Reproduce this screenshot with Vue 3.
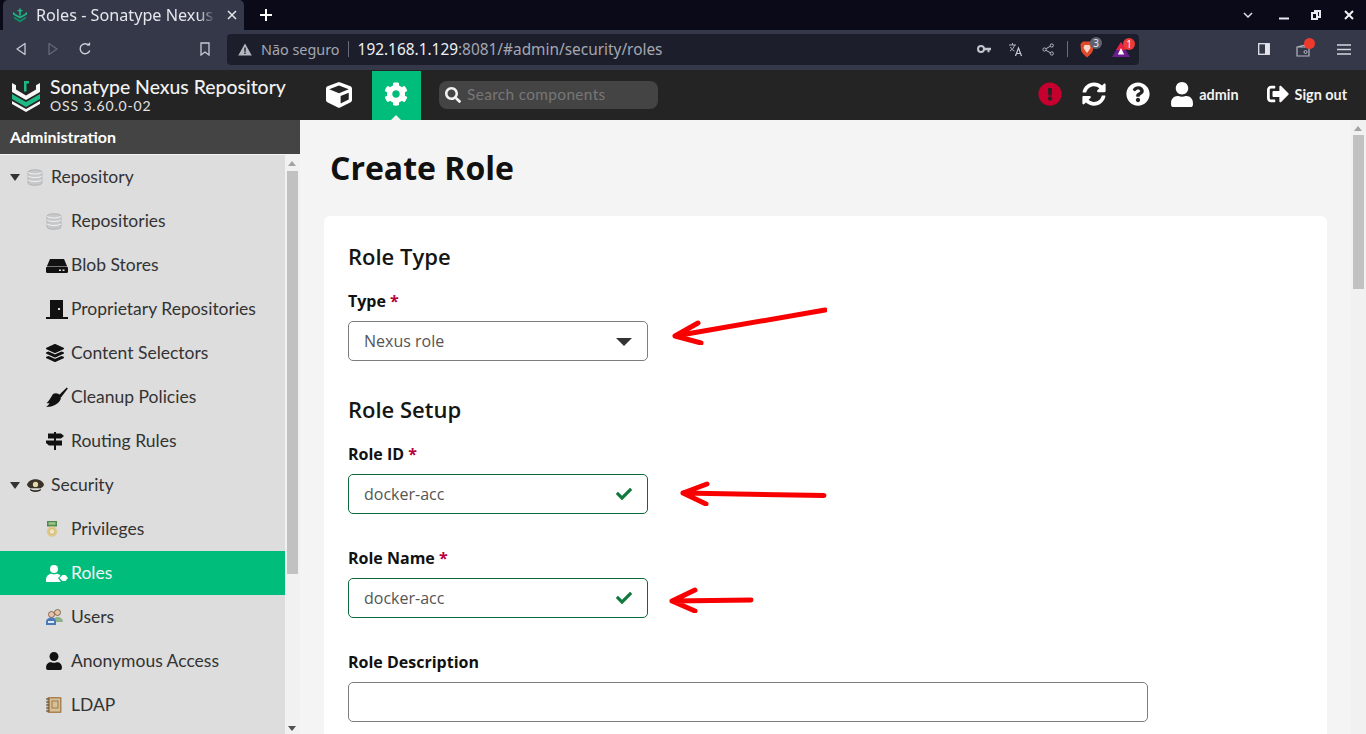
<script setup>
const cog = "M487.4 315.7l-42.6-24.6c4.3-23.2 4.3-47 0-70.2l42.6-24.6c4.9-2.8 7.1-8.6 5.5-14-11.1-35.6-30-67.8-54.7-94.6-3.8-4.1-10-5.1-14.8-2.3L380.8 110c-17.9-15.4-38.5-27.3-60.8-35.1V25.8c0-5.6-3.9-10.5-9.4-11.7-36.7-8.2-74.3-7.8-109.2 0-5.5 1.2-9.4 6.1-9.4 11.7V75c-22.2 7.9-42.8 19.8-60.8 35.1L88.7 85.5c-4.9-2.8-11-1.9-14.8 2.3-24.7 26.7-43.6 58.9-54.7 94.6-1.7 5.4.6 11.2 5.5 14L67.3 221c-4.3 23.2-4.3 47 0 70.2l-42.6 24.6c-4.9 2.8-7.1 8.6-5.5 14 11.1 35.6 30 67.8 54.7 94.6 3.8 4.1 10 5.1 14.8 2.3l42.6-24.6c17.9 15.4 38.5 27.3 60.8 35.1v49.2c0 5.6 3.9 10.5 9.4 11.7 36.7 8.2 74.3 7.8 109.2 0 5.5-1.2 9.4-6.1 9.4-11.7v-49.2c22.2-7.9 42.8-19.8 60.8-35.1l42.6 24.6c4.9 2.8 11 1.9 14.8-2.3 24.7-26.7 43.6-58.9 54.7-94.6 1.5-5.5-.7-11.3-5.6-14.1zM256 336c-44.1 0-80-35.9-80-80s35.9-80 80-80 80 35.9 80 80-35.9 80-80 80z"
const sync = "M370.72 133.28C339.458 104.008 298.888 87.962 255.848 88c-77.458.068-144.328 53.178-162.791 126.85-1.344 5.363-6.122 9.15-11.651 9.15H24.103c-7.498 0-13.194-6.807-11.807-14.176C33.933 94.924 134.813 8 256 8c66.448 0 126.791 26.136 171.315 68.685L463.03 40.97C478.149 25.851 504 36.559 504 57.941V192c0 13.255-10.745 24-24 24H345.941c-21.382 0-32.09-25.851-16.971-40.971l41.75-41.749zM32 296h134.059c21.382 0 32.09 25.851 16.971 40.971l-41.75 41.75c31.262 29.273 71.835 45.319 114.876 45.28 77.418-.07 144.315-53.144 162.787-126.849 1.344-5.363 6.122-9.15 11.651-9.15h57.304c7.498 0 13.194 6.807 11.807 14.176C478.067 417.076 377.187 504 256 504c-66.448 0-126.791-26.136-171.315-68.685L48.97 471.03C33.851 486.149 8 475.441 8 454.059V320c0-13.255 10.745-24 24-24z"
const question = "M504 256c0 136.997-111.043 248-248 248S8 392.997 8 256C8 119.083 119.043 8 256 8s248 111.083 248 248zM262.655 90c-54.497 0-89.255 22.957-116.549 63.758-3.536 5.286-2.353 12.415 2.715 16.258l34.699 26.31c5.205 3.947 12.621 3.008 16.665-2.122 17.864-22.658 30.113-35.797 57.303-35.797 20.429 0 45.698 13.148 45.698 32.958 0 14.976-12.363 22.667-32.534 33.976C247.128 238.528 216 254.941 216 296v4c0 6.627 5.373 12 12 12h56c6.627 0 12-5.373 12-12v-1.333c0-28.462 83.186-29.647 83.186-106.667 0-58.002-60.165-102-116.531-102zM256 338c-25.365 0-46 20.635-46 46 0 25.364 20.635 46 46 46s46-20.636 46-46c0-25.365-20.635-46-46-46z"
const alert = "M504 256c0 136.997-111.043 248-248 248S8 392.997 8 256C8 119.083 119.043 8 256 8s248 111.083 248 248zm-248 50c-25.405 0-46 20.595-46 46s20.595 46 46 46 46-20.595 46-46-20.595-46-46-46zm-43.673-165.346l7.418 136c.347 6.364 5.609 11.346 11.982 11.346h48.546c6.373 0 11.635-4.982 11.982-11.346l7.418-136c.375-6.874-5.098-12.654-11.982-12.654h-63.383c-6.884 0-12.356 5.78-11.981 12.654z"
const search = "M505 442.7L405.3 343c-4.5-4.5-10.6-7-17-7H372c27.6-35.3 44-79.7 44-128C416 93.1 322.9 0 208 0S0 93.1 0 208s93.1 208 208 208c48.3 0 92.7-16.4 128-44v16.3c0 6.4 2.5 12.5 7 17l99.7 99.7c9.4 9.4 24.6 9.4 33.9 0l28.3-28.3c9.4-9.4 9.4-24.6.1-34zM208 336c-70.7 0-128-57.2-128-128 0-70.7 57.2-128 128-128 70.7 0 128 57.2 128 128 0 70.7-57.2 128-128 128z"
const cube = "M239.1 6.3l-208 78c-18.7 7-31.1 25-31.1 45v225.1c0 18.2 10.3 34.8 26.5 42.9l208 104c13.5 6.8 29.4 6.8 42.9 0l208-104c16.3-8.1 26.5-24.8 26.5-42.9V129.3c0-20-12.4-37.9-31.1-44.9l-208-78C262 2.2 250 2.2 239.1 6.3zM256 68.4l192 72v1.1l-192 78-192-78v-1.1l192-72zm32 356V275.5l160-65v133.9l-160 80z"
const user = "M224 256c70.7 0 128-57.3 128-128S294.7 0 224 0 96 57.3 96 128s57.3 128 128 128zm89.6 32h-16.7c-22.2 10.2-46.9 16-72.9 16s-50.6-5.8-72.9-16h-16.7C60.2 288 0 348.2 0 422.4V464c0 26.5 21.5 48 48 48h352c26.5 0 48-21.5 48-48v-41.6c0-74.2-60.2-134.4-134.4-134.4z"
const signout = "M497 273L329 441c-15 15-41 4.5-41-17v-96H152c-13.3 0-24-10.7-24-24v-96c0-13.3 10.7-24 24-24h136V88c0-21.4 25.9-32 41-17l168 168c9.3 9.4 9.3 24.6 0 34zM192 436v-40c0-6.6-5.4-12-12-12H96c-17.7 0-32-14.3-32-32V160c0-17.7 14.3-32 32-32h84c6.6 0 12-5.4 12-12V76c0-6.6-5.4-12-12-12H96c-53 0-96 43-96 96v192c0 53 43 96 96 96h84c6.6 0 12-5.4 12-12z"
const check = "M173.898 439.404l-166.4-166.4c-9.997-9.997-9.997-26.206 0-36.204l36.203-36.204c9.997-10.007 26.207-10.007 36.204 0L192 312.69 432.095 72.596c9.997-9.997 26.207-9.997 36.204 0l36.203 36.204c9.997 9.997 9.997 26.206 0 36.204l-294.4 294.401c-9.998 9.997-26.207 9.997-36.204-.001z"

const navItems = [
  { label: 'Repository', icon: 'db', top: true },
  { label: 'Repositories', icon: 'db' },
  { label: 'Blob Stores', icon: 'blob' },
  { label: 'Proprietary Repositories', icon: 'door' },
  { label: 'Content Selectors', icon: 'layers' },
  { label: 'Cleanup Policies', icon: 'broom' },
  { label: 'Routing Rules', icon: 'sign' },
  { label: 'Security', icon: 'cap', top: true },
  { label: 'Privileges', icon: 'medal' },
  { label: 'Roles', icon: 'roles', active: true },
  { label: 'Users', icon: 'users' },
  { label: 'Anonymous Access', icon: 'anon' },
  { label: 'LDAP', icon: 'book' }
]
</script>

<template>
  <div class="page">
    <div class="tabstrip">
      <div class="tab">
        <svg class="tab-logo" viewBox="0 0 16 16" width="16" height="16">
          <path d="M1 5v2.500L8 11.500l7-4V5l-1.800 1v.8L8 9.500 2.800 6.800V6z" fill="#1fb985" />
          <path d="M2 9.500L8 13l6-3.500v2L8 15.500l-6-4z" fill="#0f8a63" />
          <path d="M7.200 1.500h1.600v7H7.200zM5.500 3h5v1.300h-5z" fill="#1fb985" />
        </svg>
        <span class="tab-title">Roles - Sonatype Nexus</span>
        <svg class="tab-close" viewBox="0 0 10 10" width="10" height="10"><path d="M1 1l8 8M9 1l-8 8" stroke="#e6e7ec" stroke-width="1.500" /></svg>
      </div>
      <svg class="newtab" viewBox="0 0 12 12" width="12" height="12"><path d="M6 0v12M0 6h12" stroke="#fff" stroke-width="2" /></svg>
      <div class="winctl">
        <svg viewBox="0 0 10 6" width="10" height="6"><path d="M1 1l4 4 4-4" fill="none" stroke="#dfe0e6" stroke-width="1.500" /></svg>
        <svg class="w-min" viewBox="0 0 10 10" width="10" height="10"><path d="M0 8.500h10" stroke="#e8e8ee" stroke-width="2" /></svg>
        <svg class="w-max" viewBox="0 0 10 10" width="10" height="10"><path d="M3 1h6v6H7M1 3h5v6H1z" fill="none" stroke="#e8e8ee" stroke-width="2" /></svg>
        <svg class="w-close" viewBox="0 0 10 10" width="10" height="10"><path d="M1 1l8 8M9 1l-8 8" stroke="#f0f0f4" stroke-width="2" /></svg>
      </div>
    </div>

    <div class="toolbar">
      <svg class="tb-back" viewBox="0 0 12 14" width="12" height="14"><path d="M10 1.500L2 7l8 5.500z" fill="none" stroke="#c8cad4" stroke-width="1.300" stroke-linejoin="round" /></svg>
      <svg class="tb-fwd" viewBox="0 0 12 14" width="12" height="14"><path d="M2 1.500L10 7l-8 5.500z" fill="none" stroke="#656979" stroke-width="1.300" stroke-linejoin="round" /></svg>
      <svg class="tb-reload" viewBox="0 0 14 14" width="14" height="14"><path d="M11.800 8.500A5 5 0 1 1 10.700 3.200" fill="none" stroke="#d0d2db" stroke-width="1.400" /><path d="M8.500 3.600h3.600V0z" fill="#d0d2db" /></svg>
      <svg class="tb-bm" viewBox="0 0 10 14" width="10" height="14"><path d="M1 1h8v12L5 10l-4 3z" fill="none" stroke="#c8cad4" stroke-width="1.300" /></svg>
      <div class="urlbar">
        <svg class="warn" viewBox="0 0 14 13" width="14" height="13"><path d="M7 .500L13.800 12.500H.2z" fill="#b4b6c0" /><path d="M6.300 4.500h1.400v4.200H6.300zM6.300 9.600h1.400v1.400H6.300z" fill="#1c1f2b" /></svg>
        <span class="insecure">Não seguro</span>
        <span class="url-sep"></span>
        <span class="url"><b>192.168.1.129</b>:8081/#admin/security/roles</span>
        <span class="url-space"></span>
        <svg class="u-key" viewBox="0 0 14 10" width="14" height="10"><circle cx="4" cy="5" r="3" fill="none" stroke="#c2c4ce" stroke-width="2" /><path d="M7 3.700h7v2.500h-1.500v2h-2v-2H7z" fill="#c2c4ce" /></svg>
        <svg class="u-tr" viewBox="0 0 15 15" width="15" height="15"><path d="M1 3h7M4.500 1v2M2 9c2.500-1.500 4-3.500 4.500-6M2.500 5c1 2 2 3 4 4" fill="none" stroke="#b4b6c0" stroke-width="1" /><path d="M7.500 14l3-8 3 8M8.500 11.500h4" fill="none" stroke="#c8cad4" stroke-width="1.200" /></svg>
        <svg class="u-share" viewBox="0 0 12 13" width="12" height="13"><circle cx="2.500" cy="6.500" r="1.600" fill="none" stroke="#b4b6c0" /><circle cx="9.800" cy="2.500" r="1.600" fill="none" stroke="#b4b6c0" /><circle cx="9.800" cy="10.500" r="1.600" fill="none" stroke="#b4b6c0" /><path d="M4 5.700l4.400-2.500M4 7.300l4.400 2.500" stroke="#b4b6c0" /></svg>
        <span class="u-sep"></span>
        <span class="brave">
          <svg viewBox="0 0 14 17" width="14" height="17"><path d="M3 .500h8L13.500 3 13 9c-.5 2.500-3.500 5.500-6 7.500C4.500 14.500 1.500 11.500 1 9L.5 3z" fill="#e2492a" /><path d="M4.500 4h5l1 3-2 3-1.500 2-1.500-2-2-3z" fill="#f5d9c8" /></svg>
          <span class="b-badge">3</span>
        </span>
        <span class="bat">
          <svg viewBox="0 0 18 15" width="18" height="15"><path d="M9 0l9 15H0z" fill="#6b1d8f" /><path d="M9 0l5 8H4z" fill="#e8213f" /><path d="M9 6l3.200 6.500H5.800z" fill="#fff" /></svg>
          <span class="r-badge">1</span>
        </span>
      </div>
      <svg class="tb-side" viewBox="0 0 12 12" width="12" height="12"><rect x=".7" y=".7" width="10.600" height="10.600" fill="none" stroke="#e4e5ea" stroke-width="1.300" /><rect x="7" y="1" width="4" height="10" fill="#e4e5ea" /></svg>
      <span class="wallet">
        <svg viewBox="0 0 14 13" width="14" height="13"><path d="M1 3h12v9H1zM1 3l8-2v2" fill="none" stroke="#b4b6c0" stroke-width="1.200" /><circle cx="9.500" cy="8" r="1.500" fill="none" stroke="#b4b6c0" /></svg>
        <span class="w-dot"></span>
      </span>
      <svg class="tb-menu" viewBox="0 0 14 11" width="14" height="11"><path d="M0 1h14M0 5.500h14M0 10h14" stroke="#d4d5dd" stroke-width="1.300" /></svg>
    </div>

    <header class="nxbar">
      <svg class="nx-logo" viewBox="0 0 28 31" width="28" height="31">
        <path d="M0 2l4 2.200v4.300l10 6 10-6V4.200L28 2v9l-14 8L0 11z" fill="#f6f6f6" />
        <path d="M0 13l14 8 14-8v5l-14 8-14-8z" fill="#1fb985" />
        <path d="M0 20l14 8 14-8v3l-14 8-14-8z" fill="#f6f6f6" />
        <path d="M12 0h5v2.500h-2.500v8H12z" fill="#1fb985" />
      </svg>
      <div class="nx-brand">
        <div class="nx-name">Sonatype Nexus Repository</div>
        <div class="nx-ver">OSS 3.60.0-02</div>
      </div>
      <button class="nx-btn nx-cube"><svg viewBox="0 0 512 512" width="26" height="26"><path :d="cube" fill="#fff" /></svg></button>
      <button class="nx-btn nx-gear"><svg viewBox="0 0 512 512" width="24" height="24"><path :d="cog" fill="#fff" /></svg><span class="nx-caret"></span></button>
      <div class="nx-search">
        <svg viewBox="0 0 512 512" width="16" height="16"><path :d="search" fill="#f2f2f2" /></svg>
        <span>Search components</span>
      </div>
      <div class="nx-right">
        <svg class="r-alert" viewBox="0 0 512 512" width="24" height="24"><path :d="alert" fill="#c5002f" /></svg>
        <svg class="r-sync" viewBox="0 0 512 512" width="24" height="24"><path :d="sync" fill="#fff" /></svg>
        <svg class="r-help" viewBox="0 0 512 512" width="24" height="24"><path :d="question" fill="#fff" /></svg>
        <svg class="r-user" viewBox="0 0 448 512" width="22" height="25"><path :d="user" fill="#fff" /></svg>
        <span class="r-text r-admin">admin</span>
        <svg class="r-out" viewBox="0 0 512 512" width="22" height="22"><path :d="signout" fill="#fff" /></svg>
        <span class="r-text">Sign out</span>
      </div>
    </header>

    <div class="body">
      <aside class="sidebar">
        <div class="side-head">Administration</div>
        <div class="side-body">
          <nav class="nav">
            <div v-for="item in navItems" :key="item.label" class="nav-row" :class="{ top: item.top, active: item.active }">
              <span v-if="item.top" class="twist"></span>
              <span class="nav-icon">
                <svg v-if="item.icon === 'db'" viewBox="0 0 16 17" width="16" height="17">
                  <path d="M1 3c0-3 14-3 14 0v11c0 3-14 3-14 0z" fill="#c6c8ca" stroke="#a8aaac" stroke-width=".7" />
                  <path d="M1 7c3 2 11 2 14 0M1 11c3 2 11 2 14 0M1 3.500c3 2 11 2 14 0" fill="none" stroke="#f2f2f2" stroke-width="1" />
                </svg>
                <svg v-else-if="item.icon === 'blob'" viewBox="0 0 22 15" width="22" height="15">
                  <path d="M4 1h14l3 7H1z" fill="#111" />
                  <rect x="0" y="8.500" width="22" height="6.500" rx="1.500" fill="#111" />
                  <path d="M13 11.500h2v1.500h-2zM16.500 11.500h2v1.500h-2z" fill="#ddd" />
                </svg>
                <svg v-else-if="item.icon === 'door'" viewBox="0 0 22 19" width="22" height="19">
                  <path d="M4 0h13v17H4z" fill="#111" /><path d="M0 17h22v2H0z" fill="#111" /><rect x="12" y="8" width="2" height="2" fill="#ddd" />
                </svg>
                <svg v-else-if="item.icon === 'layers'" viewBox="0 0 512 512" width="18" height="18"><path d="M12.410 148.020l232.940 105.670c6.800 3.090 14.490 3.090 21.290 0l232.940-105.670c16.550-7.510 16.550-32.520 0-40.030L266.650 2.310a25.607 25.607 0 0 0-21.290 0L12.410 107.980c-16.550 7.510-16.550 32.530 0 40.040zm487.180 88.280l-58.090-26.330-161.640 73.270c-7.560 3.430-15.590 5.170-23.860 5.170s-16.290-1.740-23.860-5.170L70.510 209.970l-58.100 26.330c-16.550 7.500-16.550 32.500 0 40l232.940 105.590c6.800 3.080 14.490 3.080 21.290 0L499.590 276.300c16.550-7.500 16.550-32.500 0-40zm0 127.800l-57.870-26.230-161.860 73.370c-7.560 3.430-15.590 5.170-23.860 5.170s-16.290-1.740-23.860-5.170L70.290 337.870 12.410 364.100c-16.550 7.500-16.550 32.500 0 40l232.940 105.590c6.800 3.080 14.490 3.080 21.290 0L499.590 404.100c16.550-7.500 16.550-32.500 0-40z" fill="#111" /></svg>
                <svg v-else-if="item.icon === 'broom'" viewBox="0 0 22 20" width="22" height="20">
                  <path d="M12.500 8.500L20.800 0.500l1 1L15 10.500z" fill="#111" />
                  <path d="M7 7c2.500-1.500 5.500-.8 7 1.200 1.200 1.600 1 3.300.3 4.800-1.800 3.500-6.500 6-11 6.800L0 20c2-1 3-2.800 3.500-4-1 .3-2 .3-2.800 0C3 14 5 10 7 7z" fill="#111" />
                </svg>
                <svg v-else-if="item.icon === 'sign'" viewBox="0 0 18 18" width="18" height="18">
                  <path d="M2 1.500h13l3 2.500-3 2.500H2zM0 8.500h16v5H3l-3-2.500z" fill="#111" /><path d="M8 0h2v18H8z" fill="#111" />
                </svg>
                <svg v-else-if="item.icon === 'cap'" viewBox="0 0 16 12" width="17" height="13">
                  <path d="M0 5C1 1.500 5 0 8 0s7 1.500 8 5c0 1.500-2 3-3.500 3.500h-9C2 8 0 6.500 0 5z" fill="#3a3328" />
                  <path d="M3 9c2.500 2 7.500 2 10 0v1.500c-2.500 2-7.500 2-10 0z" fill="#2a251c" /><circle cx="8" cy="5" r="2.500" fill="#e5d7a8" />
                </svg>
                <svg v-else-if="item.icon === 'medal'" viewBox="0 0 12 16" width="12" height="16">
                  <rect x="1" y="0" width="10" height="5.500" fill="#4f8b48" /><rect x="2.500" y="1.200" width="7" height="2.600" fill="#9dc08f" />
                  <circle cx="6" cy="10.500" r="5.200" fill="#e0c98a" /><circle cx="6" cy="10.500" r="2.800" fill="#f2e6bf" stroke="#c0a868" stroke-width=".6" />
                </svg>
                <svg v-else-if="item.icon === 'roles'" viewBox="0 0 22 17" width="22" height="17">
                  <circle cx="8" cy="4" r="4" fill="#fff" /><path d="M0 17v-2.500C0 11 3 8.700 5.500 8.700c1.500.8 3.500.8 5 0 1.700 0 3.200.8 4 2L12 13l3 4z" fill="#fff" />
                  <path d="M13.500 13l3-3h3l2.500 3-2.500 3h-3z" fill="#fff" />
                </svg>
                <svg v-else-if="item.icon === 'users'" viewBox="0 0 17 16" width="17" height="16">
                  <circle cx="11.500" cy="3.500" r="3" fill="#e6c6a6" stroke="#6a4f3a" stroke-width=".8" /><path d="M7 13c0-3.500 2-5 4.500-5S17 9.500 17 13z" fill="#8fb08b" />
                  <circle cx="5.500" cy="5.500" r="3" fill="#e6c6a6" stroke="#7a4a3a" stroke-width=".8" /><path d="M0 16v-3c0-3 2.500-4.500 5.500-4.500S10 10 10 13v3z" fill="#4a79b8" /><path d="M2 12h6v2H2z" fill="#dfe8f4" />
                </svg>
                <svg v-else-if="item.icon === 'anon'" viewBox="0 0 448 512" width="16" height="18"><path :d="user" fill="#111" /></svg>
                <svg v-else-if="item.icon === 'book'" viewBox="0 0 16 16" width="16" height="16">
                  <rect x="1.500" y="0" width="14" height="16" rx="1" fill="#a98355" /><rect x="4" y="1.500" width="10" height="13" fill="#d9bf94" />
                  <rect x="6" y="4" width="6" height="7" fill="none" stroke="#8c6a40" stroke-width=".8" />
                  <path d="M0 2h3M0 5h3M0 8h3M0 11h3M0 14h3" stroke="#55422b" stroke-width="1" />
                </svg>
              </span>
              <span class="nav-label">{{ item.label }}</span>
            </div>
          </nav>
          <div class="vscroll side-scroll">
            <span class="arrow up"></span>
            <span class="thumb"></span>
            <span class="arrow down"></span>
          </div>
        </div>
      </aside>

      <main class="main">
        <div class="content">
          <h1>Create Role</h1>
          <section class="card">
            <h2>Role Type</h2>
            <label class="lbl">Type <em>*</em></label>
            <div class="field">
              <span>Nexus role</span>
              <span class="caret"></span>
            </div>
            <div class="arrow-note note-1">
              <svg viewBox="0 0 156 38" width="156" height="38"><path d="M154 3L4 29M27 16L4 29M30 36L4 29" fill="none" stroke="#f80000" stroke-width="5" stroke-linecap="round" /></svg>
            </div>

            <h2 class="h-setup">Role Setup</h2>
            <label class="lbl">Role ID <em>*</em></label>
            <div class="field ok">
              <span>docker-acc</span>
              <svg viewBox="0 0 512 512" width="16" height="16"><path :d="check" fill="#0f7a3c" /></svg>
            </div>
            <div class="arrow-note note-2">
              <svg viewBox="0 0 148 26" width="148" height="26"><path d="M145 15.500L4 13M28 4L4 13M27 24L4 13" fill="none" stroke="#f80000" stroke-width="5" stroke-linecap="round" /></svg>
            </div>

            <label class="lbl lbl-next">Role Name <em>*</em></label>
            <div class="field ok">
              <span>docker-acc</span>
              <svg viewBox="0 0 512 512" width="16" height="16"><path :d="check" fill="#0f7a3c" /></svg>
            </div>
            <div class="arrow-note note-3">
              <svg viewBox="0 0 86 26" width="86" height="26"><path d="M83 13L4 14M27 3L4 14M27 24L4 14" fill="none" stroke="#f80000" stroke-width="5" stroke-linecap="round" /></svg>
            </div>

            <label class="lbl lbl-next">Role Description</label>
            <div class="field wide"></div>
          </section>
        </div>
        <div class="vscroll main-scroll">
          <span class="arrow up"></span>
          <span class="thumb"></span>
        </div>
      </main>
    </div>
  </div>
</template>

<style scoped>
.page { width: 1366px; height: 734px; overflow: hidden; display: flex; flex-direction: column; background: #f4f4f4; }

/* browser chrome */
.tabstrip { height: 30px; background: #0a0a19; display: flex; align-items: center; position: relative; flex: none; }
.tab { margin-left: 3px; width: 241px; height: 30px; background: #343849; border-radius: 5px 5px 0 0; display: flex; align-items: center; padding-left: 9px; box-sizing: border-box; position: relative; }
.tab-title { margin-left: 8px; width: 180px; overflow: hidden; white-space: nowrap; font: 16.2px "Noto Sans", sans-serif; color: #e6e7ec; -webkit-mask-image: linear-gradient(90deg, #000 90%, transparent); mask-image: linear-gradient(90deg, #000 90%, transparent); }
.tab-close { margin-left: 11px; }
.newtab { margin-left: 16px; }
.winctl { margin-left: auto; display: flex; align-items: center; margin-right: 12px; }
.winctl .w-min { margin-left: 26px; }
.winctl .w-max { margin-left: 22px; }
.winctl .w-close { margin-left: 23px; }

.toolbar { height: 40px; background: #343849; display: flex; align-items: center; flex: none; box-sizing: border-box; padding-bottom: 2px; border-top: 0; }
.tb-back { margin-left: 15px; }
.tb-fwd { margin-left: 20px; }
.tb-reload { margin-left: 19px; }
.tb-bm { margin-left: 108px; }
.urlbar { margin-left: 17px; width: 912px; height: 31px; background: #1c1f2b; border-radius: 4px; display: flex; align-items: center; padding-left: 11px; box-sizing: border-box; }
.insecure { margin-left: 9px; font: 14.4px "Noto Sans", sans-serif; color: #a5a7b2; white-space: nowrap; }
.url-sep { width: 1px; height: 16px; background: #686b79; margin-left: 8px; margin-right: 9px; }
.url { font: 15.4px "Noto Sans", sans-serif; color: #a5a7b2; white-space: nowrap; }
.url b { font-weight: 400; color: #eef0f4; }
.url-space { flex: 1; }
.u-tr { margin-left: 17px; }
.u-share { margin-left: 19px; }
.u-sep { width: 1px; height: 16px; background: #6a6d7a; margin-left: 13px; }
.brave { position: relative; margin-left: 12px; width: 14px; height: 17px; display: block; }
.b-badge { position: absolute; left: 10px; top: -4px; width: 12px; height: 12px; border-radius: 50%; background: #5f6270; color: #e8e8ee; font: 10px/12px "Noto Sans", sans-serif; text-align: center; }
.bat { position: relative; margin-left: 18px; margin-right: 9px; width: 18px; height: 15px; display: block; }
.r-badge { position: absolute; left: 11px; top: -4px; width: 12px; height: 12px; border-radius: 50%; background: #ee3a3a; color: #f7f7f7; font: 10px/12px "Noto Sans", sans-serif; text-align: center; }
.tb-side { margin-left: 119px; }
.wallet { position: relative; margin-left: 26px; width: 14px; height: 13px; display: block; }
.w-dot { position: absolute; left: 8px; top: -5px; width: 11px; height: 11px; border-radius: 50%; background: #ee3a2d; }
.tb-menu { margin-left: 27px; }

/* nexus header */
.nxbar { height: 50px; background: #242424; display: flex; align-items: center; flex: none; position: relative; }
.nx-logo { margin-left: 12px; flex: none; margin-top: 2px; }
.nx-brand { margin-left: 10px; width: 277px; height: 50px; box-sizing: border-box; padding-top: 4px; flex: none; }
.nx-name { font: 500 19.4px/25px Lato, "Open Sans", sans-serif; color: #f2f2f2; white-space: nowrap; }
.nx-ver { font: 14px/14px Lato, sans-serif; color: #e2e2e2; letter-spacing: .85px; white-space: nowrap; }
.nx-btn { border: 0; padding: 0; background: transparent; display: flex; align-items: center; justify-content: center; }
.nx-cube { width: 49px; height: 49px; margin-left: -13px; }
.nx-gear { width: 49px; height: 49px; margin-left: 9px; align-self: flex-end; background: #00bd7b; position: relative; }
.nx-gear svg { margin-top: -3px; margin-left: -1px; }
.nx-caret { position: absolute; left: 19px; bottom: 0; border-left: 5px solid transparent; border-right: 5px solid transparent; border-bottom: 5px solid #f4f4f4; }
.nx-search { margin-left: 18px; width: 219px; height: 28px; background: #444; border-radius: 8px; display: flex; align-items: center; padding-left: 6px; box-sizing: border-box; }
.nx-search span { margin-left: 6px; margin-bottom: 2px; font: 15.4px Lato, sans-serif; color: #777; letter-spacing: .35px; white-space: nowrap; }
.nx-right { margin-left: auto; display: flex; align-items: center; padding-right: 19px; padding-bottom: 2px; }
.r-sync { margin-left: 20px; }
.r-help { margin-left: 20px; }
.r-user { margin-left: 21px; margin-right: 1px; }
.r-text { font: 700 14.4px Lato, sans-serif; color: #f2f2f2; white-space: nowrap; }
.r-admin { margin-left: 5px; }
.r-out { margin-left: 28px; margin-right: 6px; }

/* sidebar */
.body { flex: 1; display: flex; min-height: 0; }
.sidebar { width: 300px; flex: none; display: flex; flex-direction: column; background: #f1f1f1; }
.side-head { height: 34px; flex: none; background: #444; color: #fff; font: 700 16px/34px Lato, "Open Sans", sans-serif; padding-left: 10px; border-bottom: 1px solid #f4f4f4; box-sizing: content-box; }
.side-body { flex: 1; min-height: 0; display: flex; }
.nav { width: 285px; background: #ddd; flex: none; }
.nav-row { height: 44px; display: flex; align-items: center; padding-left: 46px; color: #333; font: 17.5px Lato, sans-serif; white-space: nowrap; }
.nav-row.top { padding-left: 10px; }
.nav-label { padding-bottom: 1px; }
.twist { width: 0; height: 0; border-left: 5px solid transparent; border-right: 5px solid transparent; border-top: 7px solid #333; margin-right: 7px; }
.nav-icon { width: 25px; height: 20px; display: flex; align-items: center; flex: none; }
.nav-icon svg { flex: none; }
.nav-row.top .nav-icon { width: 24px; }
.nav-row.active { background: #00bd7b; color: #f4f4f4; }

.vscroll { width: 15px; flex: none; background: #f1f1f1; position: relative; }
.thumb { position: absolute; left: 2px; width: 11px; background: #c1c1c1; }
.arrow { position: absolute; left: 3px; width: 0; height: 0; border-left: 4px solid transparent; border-right: 4px solid transparent; }
.arrow.up { top: 6px; border-bottom: 5px solid #a3a3a3; }
.arrow.down { bottom: 3px; border-top: 5px solid #505050; }
.side-scroll .thumb { top: 16px; height: 403px; }
.main-scroll .thumb { top: 15px; height: 154px; }

/* content */
.main { flex: 1; display: flex; min-width: 0; overflow: hidden; background: #f4f4f4; }
.content { flex: 1; min-width: 0; padding: 0 24px 0 24px; }
h1 { margin: 0 0 26px; padding: 26px 0 0 6px; font: 700 32px/44px "Open Sans", sans-serif; color: #111; height: 44px; box-sizing: content-box; }
.card { background: #fff; border-radius: 6px; padding: 24px; height: 700px; box-sizing: border-box; position: relative; }
h2 { margin: 0; font: 600 22px/32px "Open Sans", sans-serif; color: #151515; }
.lbl { display: block; margin-top: 17px; font: 700 16px/24px "Open Sans", sans-serif; color: #111; margin-bottom: 8px; }
.lbl em { font-style: normal; color: #b8003c; }
.lbl-next { margin-top: 32px; }
.h-setup { margin-top: 32px; }
.field { width: 300px; height: 40px; box-sizing: border-box; border: 1px solid #7d7d7d; border-radius: 5px; display: flex; align-items: center; justify-content: space-between; padding: 0 15px; font: 16px "Open Sans", sans-serif; color: #555; }
.field.ok { border-color: #0b6a3a; }
.field.wide { width: 800px; }
.caret { width: 0; height: 0; border-left: 8px solid transparent; border-right: 8px solid transparent; border-top: 8px solid #333; margin-top: 2px; }
.arrow-note { position: absolute; line-height: 0; }
.note-1 { left: 347px; top: 91px; }
.note-2 { left: 355px; top: 264px; }
.note-3 { left: 344px; top: 371px; }
</style>
